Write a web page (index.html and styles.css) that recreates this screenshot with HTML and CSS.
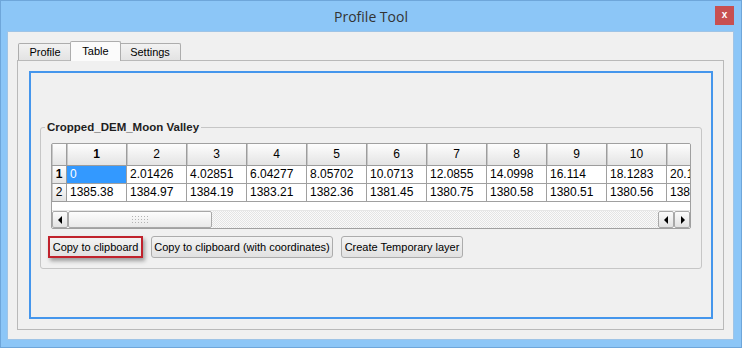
FILE: index.html
```html
<!DOCTYPE html>
<html lang="en">
<head>
    <meta charset="UTF-8">
    <title>Profile Tool</title>
    <link rel="stylesheet" href="styles.css">
</head>
<body>
    <div class="window">
        <div class="titlebar">
            <span></span>
            <span class="title">Profile Tool</span>
            <span class="close">x</span>
        </div>

        <div class="client">
            <div class="tabs">
                <div class="tab tab-profile">Profile</div>
                <div class="tab tab-table active">Table</div>
                <div class="tab tab-settings">Settings</div>
            </div>

            <div class="pane">
                <div class="frame">
                    <fieldset class="group">
                        <legend>Cropped_DEM_Moon Valley</legend>

                        <div class="grid-box">
                            <div class="grid">
                                <div class="hd corner"></div>
                                <div class="hd bold">1</div>
                                <div class="hd">2</div>
                                <div class="hd">3</div>
                                <div class="hd">4</div>
                                <div class="hd">5</div>
                                <div class="hd">6</div>
                                <div class="hd">7</div>
                                <div class="hd">8</div>
                                <div class="hd">9</div>
                                <div class="hd">10</div>
                                <div class="hd">11</div>

                                <div class="hd row bold">1</div>
                                <div class="cell selected">0</div>
                                <div class="cell">2.01426</div>
                                <div class="cell">4.02851</div>
                                <div class="cell">6.04277</div>
                                <div class="cell">8.05702</div>
                                <div class="cell">10.0713</div>
                                <div class="cell">12.0855</div>
                                <div class="cell">14.0998</div>
                                <div class="cell">16.114</div>
                                <div class="cell">18.1283</div>
                                <div class="cell">20.1425</div>

                                <div class="hd row">2</div>
                                <div class="cell">1385.38</div>
                                <div class="cell">1384.97</div>
                                <div class="cell">1384.19</div>
                                <div class="cell">1383.21</div>
                                <div class="cell">1382.36</div>
                                <div class="cell">1381.45</div>
                                <div class="cell">1380.75</div>
                                <div class="cell">1380.58</div>
                                <div class="cell">1380.51</div>
                                <div class="cell">1380.56</div>
                                <div class="cell">1380.62</div>
                            </div>

                            <div class="hscroll">
                                <span class="arrow"><svg width="5" height="8" viewBox="0 0 5 8"><polygon points="4,0 0,4 4,8" fill="#000"/></svg></span>
                                <span class="thumb"><span class="grip"></span></span>
                                <span class="track"></span>
                                <span class="arrow"><svg width="5" height="8" viewBox="0 0 5 8"><polygon points="4,0 0,4 4,8" fill="#000"/></svg></span>
                                <span class="arrow"><svg width="5" height="8" viewBox="0 0 5 8"><polygon points="1,0 5,4 1,8" fill="#000"/></svg></span>
                            </div>
                        </div>

                        <div class="buttons">
                            <button class="btn marked">Copy to clipboard</button>
                            <button class="btn btn-coords">Copy to clipboard (with coordinates)</button>
                            <button class="btn btn-layer">Create Temporary layer</button>
                        </div>
                    </fieldset>
                </div>
            </div>
        </div>
    </div>
</body>
</html>
```

FILE: styles.css
```css
body {
    margin: 0;
    font-family: "Liberation Sans", Arial, sans-serif;
    font-size: 11px;
    color: #000;
}
.window {
    box-sizing: border-box;
    width: 742px;
    height: 348px;
    background-color: #8cc6f7;
    border: 1px solid #6ea6da;
    display: flex;
    flex-direction: column;
}
.titlebar {
    height: 30px;
    display: grid;
    grid-template-columns: 1fr auto 1fr;
    align-items: center;
}
.title {
    font-family: "Open Sans", sans-serif;
    font-size: 14px;
    color: #333;
    padding-top: 1px;
}
.close {
    justify-self: end;
    align-self: start;
    margin-top: 5px;
    margin-right: 7px;
    width: 19px;
    height: 19px;
    background-color: #c75050;
    color: #fff;
    font-weight: bold;
    font-size: 10px;
    line-height: 18px;
    text-align: center;
}
.client {
    box-sizing: border-box;
    flex: 1;
    min-height: 0;
    margin: 0 7px 7px 6px;
    background-color: #f0f0f0;
    border: 1px solid #9fc4e6;
    padding: 9px;
    display: flex;
    flex-direction: column;
}
.tabs {
    display: flex;
    align-items: flex-end;
    height: 19px;
    padding-left: 1px;
    position: relative;
    z-index: 1;
}
.tab {
    box-sizing: border-box;
    height: 17px;
    padding-top: 2px;
    text-align: center;
    border: 1px solid #adadad;
    border-bottom: none;
    border-radius: 2px 2px 0 0;
    background: linear-gradient(#f2f2f2, #e3e3e3);
    color: #000;
}
.tab-profile {
    width: 54px;
}
.tab-table {
    width: 51px;
}
.tab-settings {
    width: 62px;
}
.tab.active {
    height: 20px;
    margin: 0 -2px -1px;
    padding-top: 3px;
    background: #fbfbfb;
    position: relative;
}
.pane {
    box-sizing: border-box;
    flex: 1;
    min-width: 0;
    border: 1px solid #b9b9b9;
    padding: 10px 10px 10px 11px;
    display: flex;
}
.frame {
    box-sizing: border-box;
    flex: 1;
    min-width: 0;
    border: 2px solid #4596ec;
    padding: 0 9px;
    display: flex;
    align-items: center;
}
.group {
    flex: 1;
    min-width: 0;
    margin: 0;
    border: 1px solid #c6c6c6;
    border-radius: 3px;
    padding: 9px 10px 10px 10px;
}
.group legend {
    font-weight: bold;
    font-size: 11.5px;
    color: #1e1e1e;
    padding: 0 2px;
    margin-left: -6px;
    line-height: 13px;
}
.grid-box {
    box-sizing: border-box;
    height: 86px;
    border: 1px solid #a0a0a0;
    border-radius: 2px;
    background-color: #fff;
    overflow: hidden;
    display: flex;
    flex-direction: column;
}
.grid {
    display: grid;
    grid-template-columns: 15px repeat(11, 60px);
    grid-template-rows: 22px 18px 18px;
    flex: 1;
    align-content: start;
}
.hd {
    box-sizing: border-box;
    background: linear-gradient(#fdfdfd, #e4e4e4);
    border-right: 1px solid #9c9c9c;
    border-bottom: 1px solid #9c9c9c;
    box-shadow: inset 1px 0 #c8c8c8;
    font-size: 12px;
    text-align: center;
    line-height: 21px;
}
.hd.row {
    line-height: 17px;
}
.bold {
    font-weight: bold;
}
.cell {
    box-sizing: border-box;
    border-right: 1px solid #a0a0a0;
    border-bottom: 1px solid #a0a0a0;
    padding-left: 3px;
    font-size: 12px;
    line-height: 17px;
    white-space: nowrap;
    overflow: hidden;
}
.cell.selected {
    background-color: #3399ff;
    color: #fff;
}
.hscroll {
    height: 17px;
    flex-shrink: 0;
    display: flex;
    border-top: 1px solid #e6e6e6;
}
.arrow {
    box-sizing: border-box;
    width: 16px;
    flex-shrink: 0;
    border: 1px solid #a8a8a8;
    border-radius: 2px;
    background: linear-gradient(#fbfbfb, #e2e2e2);
    display: flex;
    align-items: center;
    justify-content: center;
}
.thumb {
    box-sizing: border-box;
    width: 144px;
    flex-shrink: 0;
    border: 1px solid #a8a8a8;
    border-radius: 2px;
    background: linear-gradient(#fdfdfd, #e9e9e9);
    display: flex;
    align-items: center;
    justify-content: center;
}
.grip {
    width: 18px;
    height: 10px;
    background: radial-gradient(circle, #b4b4b4 0.8px, transparent 1px) 0 0 / 3px 3px;
}
.track {
    flex: 1;
    background: repeating-conic-gradient(#e4e4e4 0 25%, #fafafa 0 50%) 0 0 / 2px 2px;
}
.buttons {
    display: flex;
    gap: 8px;
    margin-top: 7px;
    margin-left: -3px;
}
.btn {
    box-sizing: border-box;
    height: 22px;
    padding: 0;
    white-space: nowrap;
    font-family: "Liberation Sans", Arial, sans-serif;
    font-size: 11px;
    color: #000;
    background: linear-gradient(#f3f3f3, #e1e1e1);
    border: 1px solid #acacac;
    border-radius: 3px;
}
.btn-coords {
    width: 182px;
}
.btn-layer {
    width: 122px;
}
.btn.marked {
    width: 95px;
    border: 2px solid #c0222c;
    border-radius: 0;
    box-shadow: 2px 3px 4px rgba(0,0,0,0.35);
}
```
